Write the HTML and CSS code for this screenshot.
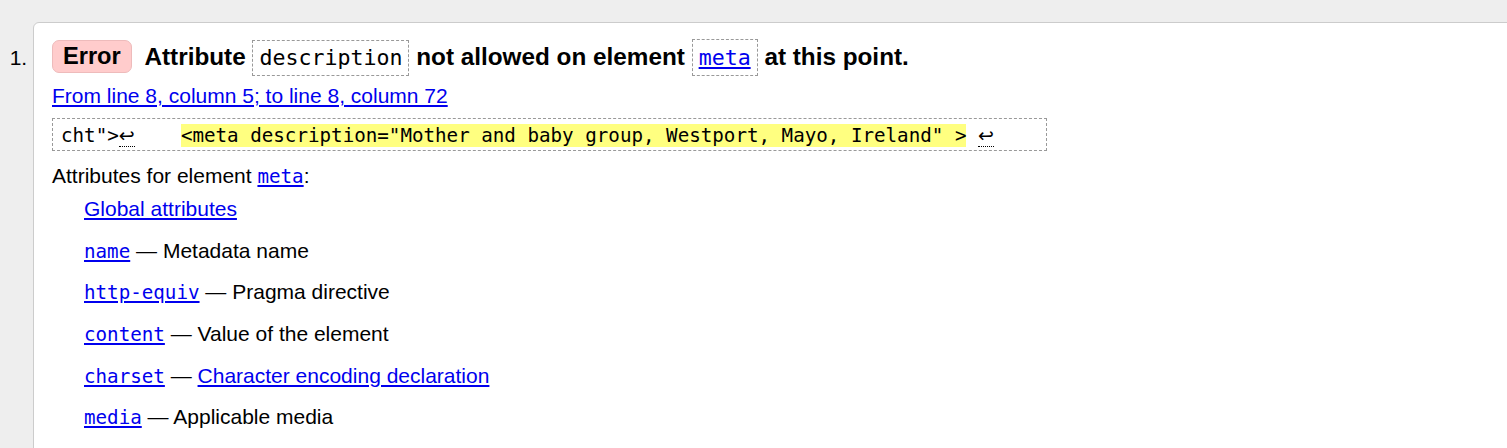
FILE: index.html
```html
<!DOCTYPE html>
<html>
<head>
<meta charset="utf-8">
<link rel="stylesheet" href="styles.css">
</head>
<body>
<ol class="messages">
  <li class="card">
    <p class="title"><strong class="badge">Error</strong> <span class="msg">Attribute <code class="box">description</code> not allowed on element <a class="box" href="#"><code>meta</code></a> at this point.</span></p>
    <p class="loc"><a href="#">From line 8, column 5; to line 8, column 72</a></p>
    <p class="extract"><code>cht"&gt;<span class="lf">↩</span>    <mark>&lt;meta description="Mother and baby group, Westport, Mayo, Ireland" &gt;</mark> <span class="lf">↩</span></code></p>
    <p class="attrs-head">Attributes for element <a href="#"><code>meta</code></a>:</p>
    <div class="attrs">
      <div class="row"><a href="#">Global attributes</a></div>
      <div class="row"><a href="#"><code>name</code></a> — Metadata name</div>
      <div class="row"><a href="#"><code>http-equiv</code></a> — Pragma directive</div>
      <div class="row"><a href="#"><code>content</code></a> — Value of the element</div>
      <div class="row"><a href="#"><code>charset</code></a> — <a href="#">Character encoding declaration</a></div>
      <div class="row"><a href="#"><code>media</code></a> — Applicable media</div>
    </div>
  </li>
</ol>
</body>
</html>
```
FILE: styles.css
```css
html, body {
  margin: 0;
  padding: 0;
  overflow: hidden;
  background: #eeeeee;
  font-family: "Liberation Sans", Arial, sans-serif;
  font-size: 21px;
  color: #000;
}
a { color: #0000ee; }
code { font-family: "DejaVu Sans Mono", monospace; font-size: 19.2px; }
.messages {
  margin: 22px -12px 0 0;
  padding: 0 0 0 33px;
}
.card {
  background: #fff;
  border: 1px solid #cccccc;
  border-radius: 6px 6px 0 0;
  padding: 16px 18px 40px 18px;
  min-height: 420px;
}
.card::marker { font-size: 21px; }
.title {
  margin: 0;
  font-weight: bold;
  font-size: 24.3px;
  line-height: 36px;
  height: 36px;
}
.badge {
  display: inline-block;
  background: #ffcccc;
  border: 1px solid #eebbbb;
  border-radius: 7px;
  padding: 0 10px;
  font-size: 23.6px;
  line-height: 31px;
  vertical-align: 1px;
}
.msg { margin-left: 6px; }
.box {
  display: inline-block;
  border: 1px dashed #999999;
  padding: 0 6px;
  line-height: 34px;
  font-weight: normal;
}
.title code { font-size: 21.6px; }
.title a.box code { font-size: 21.6px; }
.loc {
  margin: 9px 0 0 0;
  line-height: 24px;
  height: 24px;
}
.extract {
  margin: 10px 0 0 0;
  display: block;
  width: 995px;
  height: 33px;
  box-sizing: border-box;
  border: 1px dashed #999999;
  padding: 0 8px;
  line-height: 31px;
  white-space: pre;
}
.extract mark { background: #ffff80; color: #000; }
.lf {
  font-family: "DejaVu Sans", sans-serif;
  font-size: 19px;
  border-bottom: 1px dotted #000;
}
.attrs-head {
  margin: 13px 0 0 0;
  line-height: 24px;
  height: 24px;
}
.attrs {
  display: flex;
  flex-direction: column;
  gap: 17.7px;
  margin: 9px 0 0 32px;
}
.row { line-height: 24px; height: 24px; }
```
